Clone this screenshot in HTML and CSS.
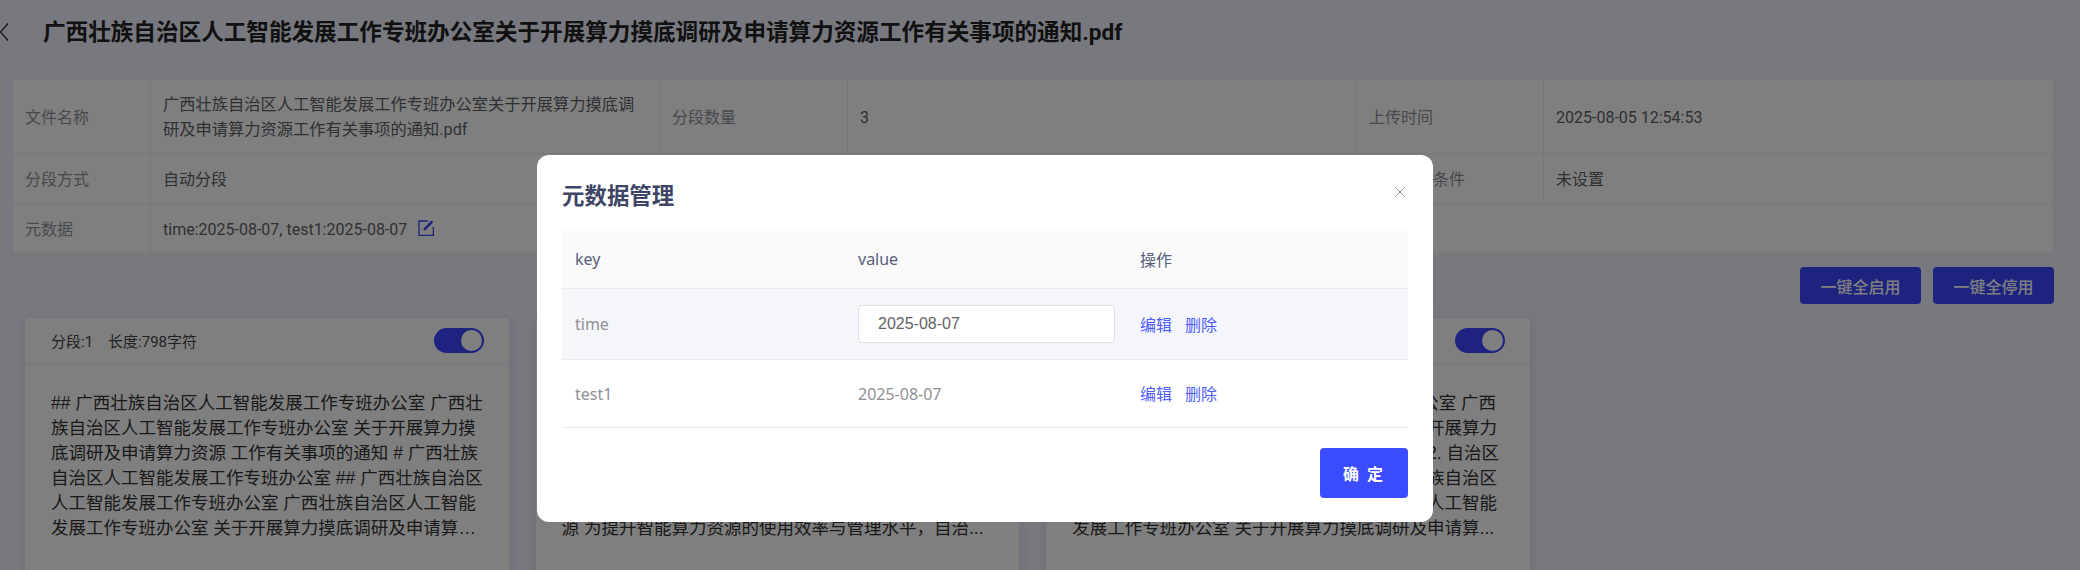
FILE: index.html
```html
<!DOCTYPE html>
<html>
<head>
  <meta charset="utf-8">
  <title>元数据管理</title>
  <link rel="stylesheet" href="styles.css">
</head>
<body>
  <!-- Page title -->
  <div class="page-head">
    <svg class="back-icon" width="9" height="18" viewBox="0 0 9 18"><path d="M8 0.5 L0.5 9 L8 17.5" fill="none" stroke="#222" stroke-width="1.2"/></svg>
    <h1>广西壮族自治区人工智能发展工作专班办公室关于开展算力摸底调研及申请算力资源工作有关事项的通知.pdf</h1>
  </div>

  <!-- File info -->
  <table class="info-table">
    <colgroup>
      <col class="col-label1"><col class="col-value"><col class="col-label2"><col class="col-value"><col class="col-label3"><col>
    </colgroup>
    <tr class="row-tall">
      <td class="label">文件名称</td>
      <td class="file-name">广西壮族自治区人工智能发展工作专班办公室关于开展算力摸底调研及申请算力资源工作有关事项的通知.pdf</td>
      <td class="label">分段数量</td>
      <td>3</td>
      <td class="label">上传时间</td>
      <td>2025-08-05 12:54:53</td>
    </tr>
    <tr>
      <td class="label">分段方式</td>
      <td>自动分段</td>
      <td class="label">分段长度</td>
      <td>800</td>
      <td class="label">分段过滤条件</td>
      <td>未设置</td>
    </tr>
    <tr>
      <td class="label">元数据</td>
      <td colspan="5">
        time:2025-08-07, test1:2025-08-07
        <svg class="edit-icon" width="16" height="16" viewBox="0 0 16 16" fill="none" stroke="#3b46ff">
          <path d="M10 1 H1 V15.3 H15.3 V7" stroke-width="1.3"/>
          <path d="M6.8 9.2 L13.6 2.2" stroke-width="2.6" stroke-linecap="round"/>
        </svg>
      </td>
    </tr>
  </table>

  <!-- Bulk actions -->
  <div class="actions">
    <button class="btn-dark">一键全启用</button>
    <button class="btn-dark">一键全停用</button>
  </div>

  <!-- Segment cards -->
  <div class="cards">
    <div class="card">
      <div class="card-head">
        <span>分段:1</span><span>长度:798字符</span>
        <div class="switch"></div>
      </div>
      <div class="card-body">## 广西壮族自治区人工智能发展工作专班办公室 广西壮族自治区人工智能发展工作专班办公室 关于开展算力摸底调研及申请算力资源 工作有关事项的通知 # 广西壮族自治区人工智能发展工作专班办公室 ## 广西壮族自治区人工智能发展工作专班办公室 广西壮族自治区人工智能发展工作专班办公室 关于开展算力摸底调研及申请算力资源工作有关事项的通知</div>
    </div>
    <div class="card">
      <div class="card-head">
        <span>分段:2</span><span>长度:800字符</span>
        <div class="switch"></div>
      </div>
      <div class="card-body">关于开展算力摸底调研及申请算力资源工作的通知<br>各市人工智能发展工作专班办公室，自治区有关单位：<br>为全面掌握全区算力资源情况，统筹全区算力资源<br>布局，现就开展算力摸底调研及申请算力资源工作<br>有关事项通知如下，推动算力资<br>源 为提升智能算力资源的使用效率与管理水平，自治...</div>
    </div>
    <div class="card">
      <div class="card-head">
        <span>分段:3</span><span>长度:612字符</span>
        <div class="switch"></div>
      </div>
      <div class="card-body">### 广西壮族自治区人工智能发展工作专班办公室 广西<br>壮族自治区人工智能发展工作专班办公室 关于开展算力<br>关于开展算力摸底调研及申请算力资源工作有 2. 自治区<br>族自治区人工智能发展工作专班办公室 广西壮族自治区<br>人工智能发展工作专班办公室 广西壮族自治区人工智能<br>发展工作专班办公室 关于开展算力摸底调研及申请算...</div>
    </div>
  </div>

  <!-- Metadata dialog -->
  <div class="overlay">
    <div class="modal">
      <div class="modal-head">
        <h2>元数据管理</h2>
        <svg class="close-icon" width="12" height="12" viewBox="0 0 12 12"><path d="M1 1 L11 11 M11 1 L1 11" stroke="#8f929b" stroke-width="1"/></svg>
      </div>
      <table class="meta-table">
        <colgroup><col class="col-key"><col class="col-val"><col></colgroup>
        <tr class="meta-header">
          <th>key</th>
          <th>value</th>
          <th>操作</th>
        </tr>
        <tr class="meta-active">
          <td>time</td>
          <td><input class="date-input" type="text" value="2025-08-07"></td>
          <td class="meta-ops"><a class="link">编辑</a><a class="link">删除</a></td>
        </tr>
        <tr class="meta-plain">
          <td>test1</td>
          <td>2025-08-07</td>
          <td class="meta-ops"><a class="link">编辑</a><a class="link">删除</a></td>
        </tr>
      </table>
      <div class="modal-foot">
        <button class="btn-primary">确 定</button>
      </div>
    </div>
  </div>
</body>
</html>
```

FILE: styles.css
```css
html, body {
  height: 570px;
  overflow: hidden;
}
body {
  margin: 0;
  padding: 0 26px 0 12px;
  background: #f0f0ff;
  color: #222;
  font-family: Roboto, "Noto Sans CJK SC", sans-serif;
  font-size: 16px;
}
/* Page title */
.page-head {
  height: 79px;
  margin-left: -12px;
  display: flex;
  align-items: flex-start;
}
.back-icon {
  margin-top: 23px;
  flex: none;
}
.page-head h1 {
  margin: 17px 0 0 34px;
  font-size: 22.6px;
  line-height: 32px;
  font-weight: 700;
  white-space: nowrap;
}
/* File info table */
.info-table {
  width: 100%;
  table-layout: fixed;
  border-collapse: collapse;
  background: #fff;
  color: #606266;
}
.info-table td {
  box-sizing: border-box;
  height: 50px;
  padding: 2px 12px 0;
  border: 1px solid #ebeef5;
  line-height: 25px;
}
.info-table .row-tall td {
  height: 74px;
  padding-top: 1px;
}
.info-table .label {
  color: #909399;
  white-space: nowrap;
}
.info-table .file-name {
  font-size: 16.25px;
}
.col-label1 { width: 138px; }
.col-label2 { width: 188px; }
.col-label3 { width: 187px; }
.col-value { width: 509px; }
.edit-icon {
  margin-left: 7px;
  vertical-align: -1px;
}
/* Bulk actions */
.actions {
  display: flex;
  justify-content: flex-end;
  gap: 12px;
  margin-top: 13px;
}
.btn-dark {
  width: 121px;
  height: 37px;
  padding: 0;
  border: none;
  border-radius: 4px;
  background: #3b46ff;
  color: #fff;
  font: 500 16px "Noto Sans", "Noto Sans CJK SC", sans-serif;
}
/* Segment cards */
.cards {
  display: flex;
  gap: 27px;
  margin: 14px 0 0 13px;
}
.card {
  flex: none;
  width: 483.6px;
  height: 300px;
  background: #fff;
  border-radius: 4px;
  box-shadow: 0 2px 12px rgba(0, 0, 0, 0.1);
}
.card-head {
  height: 45px;
  padding: 0 25px 0 26px;
  display: flex;
  align-items: center;
  gap: 15px;
  border-bottom: 1px solid #ebeef5;
  font-size: 15px;
  color: #444;
}
.switch {
  position: relative;
  width: 50px;
  height: 25px;
  margin-left: auto;
  border-radius: 13px;
  background: #3b46ff;
}
.switch::after {
  content: "";
  position: absolute;
  right: 2px;
  top: 2px;
  width: 21px;
  height: 21px;
  border-radius: 50%;
  background: #fff;
}
.card-body {
  margin: 27px 23px 0 26px;
  font-family: "Liberation Sans", "Noto Sans CJK SC", sans-serif;
  font-size: 17.5px;
  line-height: 25px;
  color: #333;
  display: -webkit-box;
  -webkit-box-orient: vertical;
  -webkit-line-clamp: 6;
  overflow: hidden;
}
/* Dialog */
.overlay {
  position: fixed;
  top: 0;
  right: 0;
  bottom: 0;
  left: 0;
  background: rgba(0, 0, 0, 0.5);
}
.modal {
  position: absolute;
  left: 537px;
  top: 155px;
  width: 846px;
  height: 367px;
  padding: 0 25px;
  background: #fff;
  border-radius: 12px;
  font-family: "Noto Sans", "Noto Sans CJK SC", sans-serif;
}
.modal-head {
  height: 74px;
  display: flex;
  justify-content: space-between;
  align-items: flex-start;
}
.modal-head h2 {
  margin: 25px 0 0 0;
  font-size: 22.45px;
  line-height: 32px;
  font-weight: 700;
  color: #3d4465;
}
.close-icon {
  margin: 31px 2px 0 0;
}
.meta-table {
  width: 100%;
  table-layout: fixed;
  border-collapse: collapse;
}
.col-key { width: 283px; }
.col-val { width: 282px; }
.meta-table th, .meta-table td {
  padding: 0 13px;
  border-bottom: 1px solid #e9ecf3;
  text-align: left;
  font-weight: 400;
}
.meta-table th {
  color: #56607a;
  padding-top: 2px;
}
.meta-table td {
  color: #8f9094;
  padding-top: 1px;
}
.meta-table .meta-ops {
  padding-top: 0;
}
.meta-header {
  height: 59px;
  background: #fafafa;
}
.meta-active {
  height: 71px;
  background: #f5f6fb;
}
.meta-active .date-input {
  margin-top: -1px;
}
.meta-plain {
  height: 68px;
}
.date-input {
  display: block;
  width: 257px;
  height: 38px;
  box-sizing: border-box;
  padding: 0 19px;
  border: 1px solid #dcdfe6;
  border-radius: 4px;
  background: #fff;
  color: #606266;
  font: 16px "Liberation Sans", sans-serif;
}
.link {
  margin-right: 13px;
  color: #4f5dff;
}
.modal-foot {
  display: flex;
  justify-content: flex-end;
  margin-top: 20px;
}
.btn-primary {
  width: 88px;
  height: 50px;
  border: none;
  border-radius: 4px;
  background: #3b4bff;
  color: #fff;
  font: 700 16px "Noto Sans", "Noto Sans CJK SC", sans-serif;
  letter-spacing: 2px;
}
```
